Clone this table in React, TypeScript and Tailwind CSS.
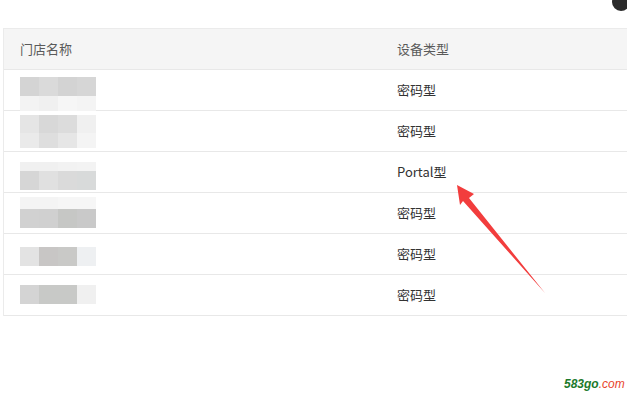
type Band = { h: string; colors: string[] };

const rows: { type: string; pad: string; bands: Band[] }[] = [
  {
    type: "密码型",
    pad: "pt-[7px]",
    bands: [
      { h: "h-[19px]", colors: ["#d4d4d4", "#dadada", "#d3d3d3", "#d6d6d6"] },
      { h: "h-[15px]", colors: ["#f3f3f3", "#f0f0f0", "#f6f6f6", "#f4f4f4"] },
    ],
  },
  {
    type: "密码型",
    pad: "pt-[4px]",
    bands: [
      { h: "h-[18px]", colors: ["#e5e5e5", "#d8d8d8", "#dcdcdc", "#f0f0f0"] },
      { h: "h-[15px]", colors: ["#eaeaea", "#dedede", "#e6e6e6", "#f4f4f4"] },
    ],
  },
  {
    type: "Portal型",
    pad: "pt-[10px]",
    bands: [
      { h: "h-[9px]", colors: ["#f0f0f0", "#f0f0f0", "#f2f2f2", "#f3f3f3"] },
      { h: "h-[19px]", colors: ["#d6d6d6", "#e0e0e0", "#dadada", "#d8dada"] },
    ],
  },
  {
    type: "密码型",
    pad: "pt-[4px]",
    bands: [
      { h: "h-[12px]", colors: ["#f4f4f4", "#f4f4f4", "#f6f6f6", "#f6f6f6"] },
      { h: "h-[19px]", colors: ["#d1d1d1", "#d0d0d0", "#c6c7c5", "#c9c9c9"] },
    ],
  },
  {
    type: "密码型",
    pad: "pt-[13px]",
    bands: [{ h: "h-[19px]", colors: ["#e3e3e3", "#c8c6c5", "#c9c9c7", "#eef0f2"] }],
  },
  {
    type: "密码型",
    pad: "pt-[10px]",
    bands: [{ h: "h-[19px]", colors: ["#d4d4d4", "#c8c9c7", "#c8c9c7", "#f0f0f0"] }],
  },
];

const Mosaic = ({ bands }: { bands: Band[] }) => (
  <div className="flex flex-col">
    {bands.map((band, b) => (
      <div key={b} className="flex">
        {band.colors.map((c, i) => (
          <div key={i} className={`w-[19px] ${band.h}`} style={{ backgroundColor: c }} />
        ))}
      </div>
    ))}
  </div>
);

const App = () => {
  return (
    <div
      className="relative w-[627px] h-[402px] bg-white overflow-hidden"
      style={{ fontFamily: '"Noto Sans CJK SC", "Noto Sans", sans-serif' }}
    >
      <div className="pt-[28px] pl-[3px]">
        <div className="border-l border-t border-[#ebebeb] w-[640px]">
          <div className="flex items-center h-[41px] bg-[#f5f5f5] border-b border-[#e8e8e8] text-[13px] text-[#5a5a5a]">
            <div className="w-[377px] pl-[16px]">门店名称</div>
            <div className="pl-[16px]">设备类型</div>
          </div>
          {rows.map((row, i) => (
            <div key={i} className="flex h-[41px] border-b border-[#e8e8e8] text-[13px] text-[#333]">
              <div className={`w-[377px] pl-[16px] ${row.pad}`}>
                <Mosaic bands={row.bands} />
              </div>
              <div className="pl-[16px] self-center">{row.type}</div>
            </div>
          ))}
        </div>
      </div>

      {/* corner close button, mostly off-screen */}
      <div className="absolute -top-[7px] left-[612px] w-[18px] h-[18px] rounded-full bg-[#2b2b2b]" />

      {/* red annotation arrow */}
      <svg className="absolute left-0 top-0" width="627" height="402" viewBox="0 0 627 402">
        <polygon points="457,185 474,194 469,198 545,293 463,201 460,205" fill="#f23d3d" />
      </svg>

      <div
        className="absolute left-[564px] top-[378px] text-[12px] italic font-bold leading-none"
        style={{ fontFamily: '"Liberation Sans", sans-serif' }}
      >
        <span className="text-[#1c7a2c]">583go</span>
        <span className="text-[#e8452c] font-normal">.com</span>
      </div>
    </div>
  );
};

export default App;
